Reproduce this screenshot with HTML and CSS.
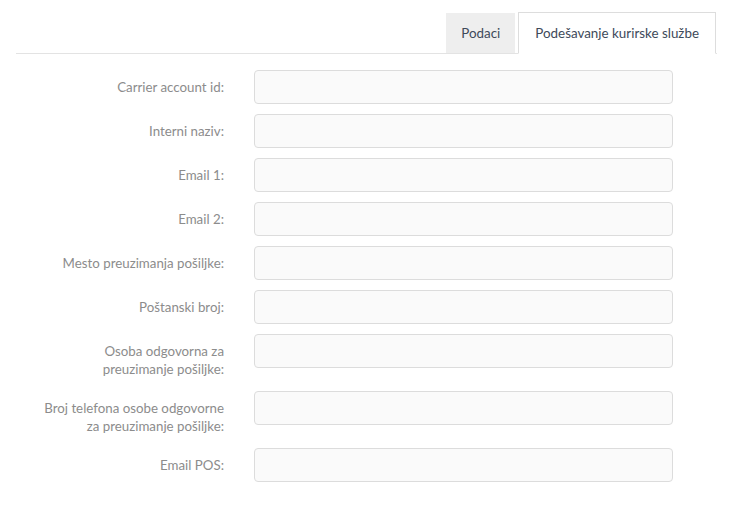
FILE: index.html
```html
<!DOCTYPE html>
<html>
<head>
<meta charset="utf-8">
<link rel="stylesheet" href="styles.css">
</head>
<body>
<div class="page">
  <div class="tabs">
    <div class="tab">Podaci</div>
    <div class="tab active">Podešavanje kurirske službe</div>
  </div>
  <form class="form">
    <div class="row"><label class="lbl">Carrier account id:</label><input class="inp" type="text"></div>
    <div class="row"><label class="lbl">Interni naziv:</label><input class="inp" type="text"></div>
    <div class="row"><label class="lbl">Email 1:</label><input class="inp" type="text"></div>
    <div class="row"><label class="lbl">Email 2:</label><input class="inp" type="text"></div>
    <div class="row"><label class="lbl">Mesto preuzimanja pošiljke:</label><input class="inp" type="text"></div>
    <div class="row"><label class="lbl">Poštanski broj:</label><input class="inp" type="text"></div>
    <div class="row"><label class="lbl">Osoba odgovorna za<br>preuzimanje pošiljke:</label><input class="inp" type="text"></div>
    <div class="row"><label class="lbl">Broj telefona osobe odgovorne<br>za preuzimanje pošiljke:</label><input class="inp" type="text"></div>
    <div class="row"><label class="lbl">Email POS:</label><input class="inp" type="text"></div>
  </form>
</div>
</body>
</html>
```

FILE: styles.css
```css
* { box-sizing: border-box; }
body {
  margin: 0;
  background: #fff;
  font-family: "Lato", "Open Sans", sans-serif;
}
.page {
  width: 701px;
  margin-left: 16px;
}
.tabs {
  display: flex;
  justify-content: flex-end;
  align-items: flex-end;
  gap: 3px;
  height: 54px;
  border-bottom: 1px solid #e3e3e3;
  padding-right: 1px;
}
.tab {
  height: 40px;
  padding: 0 15px;
  display: flex;
  align-items: center;
  font-size: 13.4px;
  color: #3e4a5a;
  background: #eeeeee;
}
.tab.active {
  height: 42px;
  background: #fff;
  border: 1px solid #dddddd;
  border-bottom: 1px solid #fff;
  margin-bottom: -1px;
  padding: 0 16px;
}
.form {
  margin-top: 16px;
}
.row {
  display: grid;
  grid-template-columns: 208px 419px;
  column-gap: 30px;
  align-items: start;
  margin-bottom: 10px;
}
.lbl {
  text-align: right;
  font-size: 13.3px;
  line-height: 18px;
  padding: 8px 0 3px;
  color: #8c8c8c;
  white-space: nowrap;
}
.inp {
  height: 34px;
  width: 419px;
  border: 1px solid #dcdcdc;
  border-radius: 4px;
  background: #fafafa;
  margin: 0;
  padding: 6px 12px;
  font: inherit;
}
```
